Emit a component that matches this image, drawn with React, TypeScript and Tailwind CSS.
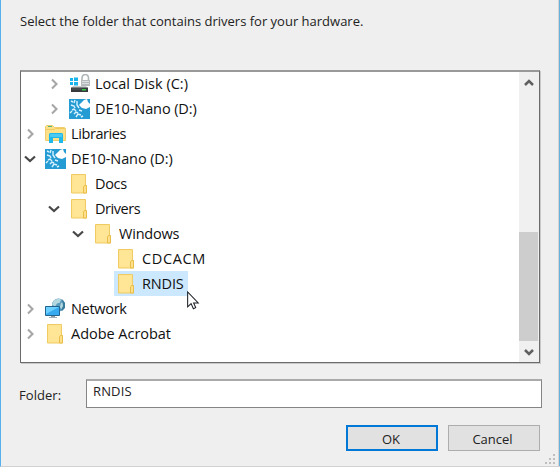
import type { ReactNode } from "react";

function Folder() {
  return (
    <svg className="block" width="20" height="22" viewBox="0 0 20 22">
      <path d="M2.500 1.500h14v11.500h1v7h-15z" fill="#ffe390" stroke="#f0cb63" />
      <path d="M3.500 2.500h12v16h-12z" fill="#ffe596" />
      <path d="M14.500 20v-6l1-1.500h2V20z" fill="#ffe08a" stroke="#e9bd49" />
    </svg>
  );
}

function Board() {
  return (
    <svg className="block" width="21" height="20" viewBox="0 0 21 20">
      <path d="M0 0h21v20H0z" fill="#259bd3" />
      <path d="M15 1l3-1 1 3 2 2v3l-4 2-4-1-3-3 2-2z" fill="#fff" />
      <path
        d="M2 2l2 1M6 1l-1 3M2 6l3 1 1 2M8 2v4l2 3M3 11l2-1 2 2M1 14l2-2M5 15l2-2 2 1M7 18l2-3 3 1M10 11l3 1M12 18l2-1"
        stroke="#d8f2ff" strokeWidth="1.400" fill="none"
      />
    </svg>
  );
}

function Disk() {
  return (
    <svg className="block" width="21" height="20" viewBox="0 0 21 20">
      <path d="M1 4h3v3H1zM5 3.500h4V7H5zM1 8h3v3H1zM5 8h4v3.500H5z" fill="#18b5ec" />
      <path d="M13 7V4c0-4.500 6-4.500 6.500-.5V6" stroke="#aeb5b7" strokeWidth="1.600" fill="none" />
      <path d="M12 6h9v6h-9z" fill="#b5bbbd" />
      <path d="M13 7.500h7M13 9.500h7" stroke="#dce0e2" />
      <path d="M4 12h13l2 2.500H2z" fill="#c8cccd" />
      <path d="M2 13.500h17V18H2z" fill="#373b3d" />
      <path d="M3 15h10" stroke="#555d5d" />
      <path d="M13 15h4v1.500h-4z" fill="#35ce48" />
    </svg>
  );
}

function Libraries() {
  return (
    <svg className="block" width="21" height="20" viewBox="0 0 21 20">
      <path d="M.5 16.500V2.500l1-1h6l2 2h10l1 1v12z" fill="#ffe18a" stroke="#f0cd6c" />
      <path d="M1 5.500h8l1.500-1H20" stroke="#efc85e" fill="none" />
      <path d="M3 2.500h4" stroke="#4fb77c" />
      <path d="M4 19V10l1-1h12l1 1v9h-4v-5H8v5z" fill="#20b7ea" />
      <path d="M5 10h12v3H5z" fill="#4ccaf1" />
    </svg>
  );
}

function Network() {
  return (
    <svg className="block" width="21" height="21" viewBox="0 0 21 21">
      <circle cx="13.500" cy="7" r="6.500" fill="#5b9dbd" />
      <path d="M9 2.500l4-2 3 1-1 3-3 1-2 3-3-2zM16 5l3-1 1 4-3 4-2-3z" fill="#b6d8df" />
      <path d="M17 1l3 4v5l-3 3-1-1 2-4z" fill="#397b9d" />
      <path d="M.5 8.500h14v9H.5z" fill="#37a9ef" stroke="#22648e" />
      <path d="M1 9h13L1 16z" fill="#6bd0ff" />
      <path d="M6 18h4v1H6z" fill="#8b9aa2" />
      <path d="M4 19.500h8" stroke="#a2afb7" />
    </svg>
  );
}

const icons = { folder: Folder, board: Board, disk: Disk, libraries: Libraries, network: Network };

function Chevron({ open }: { open?: boolean }) {
  return open ? (
    <svg className="block" width="12" height="12" viewBox="0 0 12 12">
      <path d="M1 3.500l5 4.500 5-4.500" fill="none" stroke="#484848" strokeWidth="2.200" />
    </svg>
  ) : (
    <svg className="block" width="12" height="12" viewBox="0 0 12 12">
      <path d="M4 1.500L8.500 6 4 10.500" fill="none" stroke="#a6a6a6" strokeWidth="2.100" />
    </svg>
  );
}

type RowProps = {
  indent: string;
  arrow?: "open" | "closed";
  icon: keyof typeof icons;
  selected?: boolean;
  tracking: string;
  children: ReactNode;
};

function Row({ indent, arrow, icon, selected, tracking, children }: RowProps) {
  const Icon = icons[icon];
  return (
    <div className={`flex h-[25px] items-center ${indent}`}>
      <span className="mr-[7px] flex w-3 shrink-0 justify-center">{arrow && <Chevron open={arrow === "open"} />}</span>
      <span className={`flex h-[25px] items-center whitespace-nowrap pl-px pr-[4px] ${selected ? "bg-[#cce8ff]" : ""}`}>
        <span className="mr-[5px] flex w-[22px] justify-center"><Icon /></span>
        <span className={`text-[14.500px] leading-[25px] text-[#111] ${tracking}`}>{children}</span>
      </span>
    </div>
  );
}

export default function App() {
  return (
    <main className="relative flex h-[467px] w-[560px] flex-col overflow-hidden border-b border-l border-b-[#d2d2d2] border-l-[#57b1ed] bg-[#efefef] font-['Open_Sans','Noto_Sans',sans-serif] text-[#222]">
      <p className="ml-[19px] mt-[10px] h-[22px] whitespace-nowrap text-[13px] leading-[22px]">Select the folder that contains drivers for your hardware.</p>

      <section className="ml-[19px] mt-[38px] flex h-[293px] w-[520px] border border-t-2 border-b-[#6b6b6b] border-l-[#6b6b6b] border-r-[#6b6b6b] border-t-[#999] bg-white shadow-[1px_1px_0_#c8c8c8]">
        <div className="-mt-px w-[498px] shrink-0 pl-[3px]">
          <Row indent="pl-6" arrow="closed" icon="disk" tracking="tracking-[0.020px]">Local Disk (C:)</Row>
          <Row indent="pl-6" arrow="closed" icon="board" tracking="tracking-[-0.100px]">DE10-Nano (D:)</Row>
          <Row indent="pl-0" arrow="closed" icon="libraries" tracking="tracking-[-0.400px]">Libraries</Row>
          <Row indent="pl-0" arrow="open" icon="board" tracking="tracking-[-0.100px]">DE10-Nano (D:)</Row>
          <Row indent="pl-6" icon="folder" tracking="tracking-[-0.350px]">Docs</Row>
          <Row indent="pl-6" arrow="open" icon="folder" tracking="tracking-[-0.450px]">Drivers</Row>
          <Row indent="pl-12" arrow="open" icon="folder" tracking="tracking-[-0.200px]">Windows</Row>
          <Row indent="pl-[71px]" icon="folder" tracking="tracking-[0.650px]">CDCACM</Row>
          <Row indent="pl-[71px]" icon="folder" selected tracking="tracking-[-0.150px]">RNDIS</Row>
          <Row indent="pl-0" arrow="closed" icon="network" tracking="tracking-[-0.300px]">Network</Row>
          <Row indent="pl-0" arrow="closed" icon="folder" tracking="tracking-[-0.030px]">Adobe Acrobat</Row>
        </div>
        <div className="flex w-5 flex-col items-center bg-[#f0f0f0]">
          <svg className="mt-[5px] block" width="12" height="12" viewBox="0 0 12 12">
            <path d="M2 8l4-4 4 4" fill="none" stroke="#606060" strokeWidth="2.500" />
          </svg>
          <div className="mt-[143px] h-[109px] w-[19px] self-start bg-[#cdcdcd]" />
          <svg className="mt-[5px] block" width="12" height="12" viewBox="0 0 12 12">
            <path d="M2 4l4 4 4-4" fill="none" stroke="#606060" strokeWidth="2.500" />
          </svg>
        </div>
      </section>

      <div className="ml-[18px] mt-4 flex h-[29px]">
        <label className="w-[67px] pt-[5px] text-[13px] leading-[22px] tracking-[0.050px]">Folder:</label>
        <div className="h-[29px] w-[456px] border border-[#858585] border-t-2 border-t-[#aaa] bg-white pl-[6px] text-[13px] leading-[21px] tracking-[0.150px]">RNDIS</div>
      </div>

      <div className="ml-[345px] mt-[17px] flex gap-[10px] text-[13px]">
        <button className="h-[26px] w-[92px] border-2 border-[#0078d7] bg-[#e1e1e1] pr-[2px] leading-[24px]">OK</button>
        <button className="h-[26px] w-[92px] border border-[#adadad] bg-[#e1e1e1] pr-[3px] leading-[26px]">Cancel</button>
      </div>

      <div className="absolute right-0 top-0 h-full w-[2px] border-l border-r border-l-[#d6d3d1] border-r-[#65b3dc]" />
      <svg className="absolute bottom-[1px] right-[4px]" width="11" height="11" viewBox="0 0 11 11">
        <path d="M8 0h2v2H8zM4 4h2v2H4zM8 4h2v2H8zM0 8h2v2H0zM4 8h2v2H4zM8 8h2v2H8z" fill="#bebebe" />
      </svg>
      <svg className="absolute left-[186px] top-[291px]" width="13" height="20" viewBox="0 0 14 21">
        <path d="M.7.800v16l3.700-3.500 2.500 5.500 2.500-1.200-2.300-5h5z" fill="#fff" stroke="#171a20" strokeWidth="1.100" />
      </svg>
    </main>
  );
}
